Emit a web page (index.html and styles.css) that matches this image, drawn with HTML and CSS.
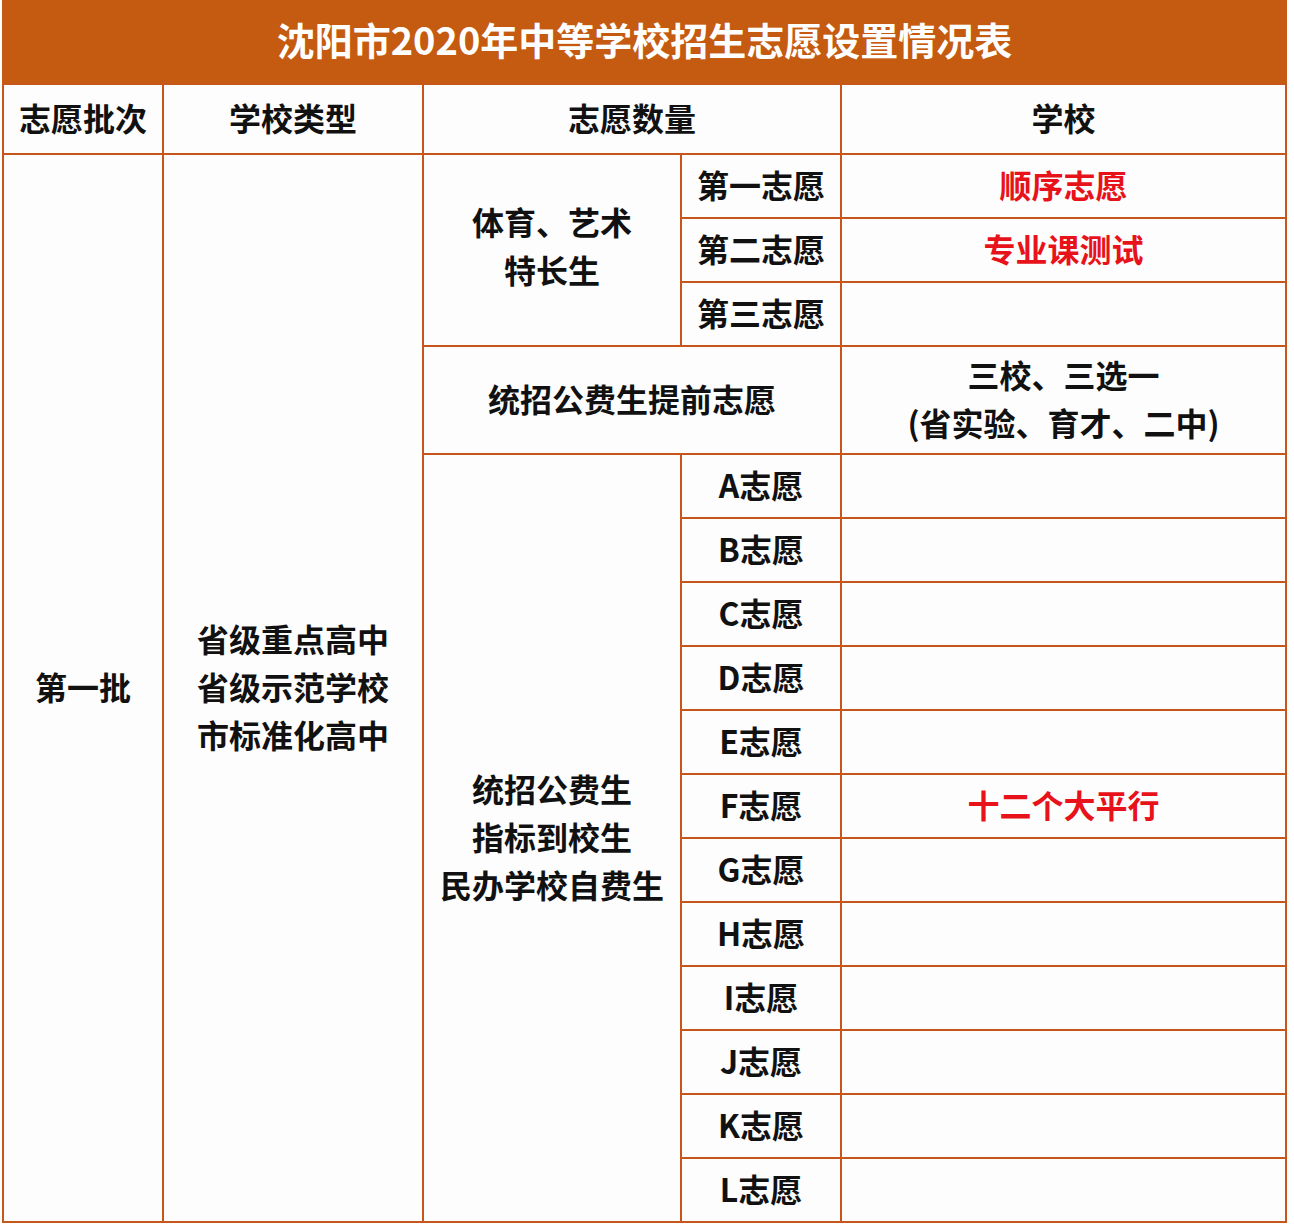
FILE: index.html
```html
<!DOCTYPE html>
<html lang="zh-CN">
<head>
<meta charset="utf-8">
<title>沈阳市2020年中等学校招生志愿设置情况表</title>
<link rel="stylesheet" href="styles.css">
</head>
<body>
<div class="sheet">
  <div class="title">沈阳市2020年中等学校招生志愿设置情况表</div>

  <div class="cell head">志愿批次</div>
  <div class="cell head">学校类型</div>
  <div class="cell head span-2">志愿数量</div>
  <div class="cell head">学校</div>

  <div class="cell batch">第一批</div>
  <div class="cell type multi">省级重点高中<br>省级示范学校<br>市标准化高中</div>

  <div class="cell group-art multi">体育、艺术<br>特长生</div>
  <div class="cell">第一志愿</div>
  <div class="cell red">顺序志愿</div>
  <div class="cell">第二志愿</div>
  <div class="cell red">专业课测试</div>
  <div class="cell">第三志愿</div>
  <div class="cell"></div>

  <div class="cell span-2">统招公费生提前志愿</div>
  <div class="cell multi">三校、三选一<br>(省实验、育才、二中)</div>

  <div class="cell group-main multi">统招公费生<br>指标到校生<br>民办学校自费生</div>
  <div class="cell">A志愿</div><div class="cell"></div>
  <div class="cell">B志愿</div><div class="cell"></div>
  <div class="cell">C志愿</div><div class="cell"></div>
  <div class="cell">D志愿</div><div class="cell"></div>
  <div class="cell">E志愿</div><div class="cell"></div>
  <div class="cell">F志愿</div><div class="cell red">十二个大平行</div>
  <div class="cell">G志愿</div><div class="cell"></div>
  <div class="cell">H志愿</div><div class="cell"></div>
  <div class="cell">I志愿</div><div class="cell"></div>
  <div class="cell">J志愿</div><div class="cell"></div>
  <div class="cell">K志愿</div><div class="cell"></div>
  <div class="cell">L志愿</div><div class="cell"></div>
</div>
</body>
</html>
```

FILE: styles.css
```css
html, body {
  margin: 0;
  padding: 0;
  background: #ffffff;
}

body {
  font-family: "Noto Sans CJK SC", "Noto Sans", sans-serif;
  color: #111111;
}

.sheet {
  margin-left: 2px;
  width: 1285px;
  box-sizing: border-box;
  display: grid;
  grid-template-columns: 158px 258px 256px 158px 443px;
  grid-template-rows: 81px 68px 62px 62px 62px 106px repeat(12, 62px);
  gap: 2px;
  padding: 2px;
  background: #c6561a;
}

.title {
  grid-column: 1 / -1;
  margin: -2px -2px 0;
  background: #c55a11;
  color: #ffffff;
  font-size: 38px;
  font-weight: 700;
  display: flex;
  align-items: center;
  justify-content: center;
  padding-bottom: 6px;
}

.cell {
  background: #fdfdfd;
  display: flex;
  align-items: center;
  justify-content: center;
  text-align: center;
  font-size: 32px;
  font-weight: 700;
  line-height: 48px;
  padding-bottom: 4px;
}

.head {
  font-weight: 700;
}

.span-2 {
  grid-column: span 2;
}

.batch {
  grid-column: 1;
  grid-row: 3 / 19;
}

.type {
  grid-column: 2;
  grid-row: 3 / 19;
}

.group-art {
  grid-column: 3;
  grid-row: 3 / 6;
  padding-bottom: 10px;
}

.group-main {
  grid-column: 3;
  grid-row: 7 / 19;
}

.red {
  color: #e8121a;
}
```
